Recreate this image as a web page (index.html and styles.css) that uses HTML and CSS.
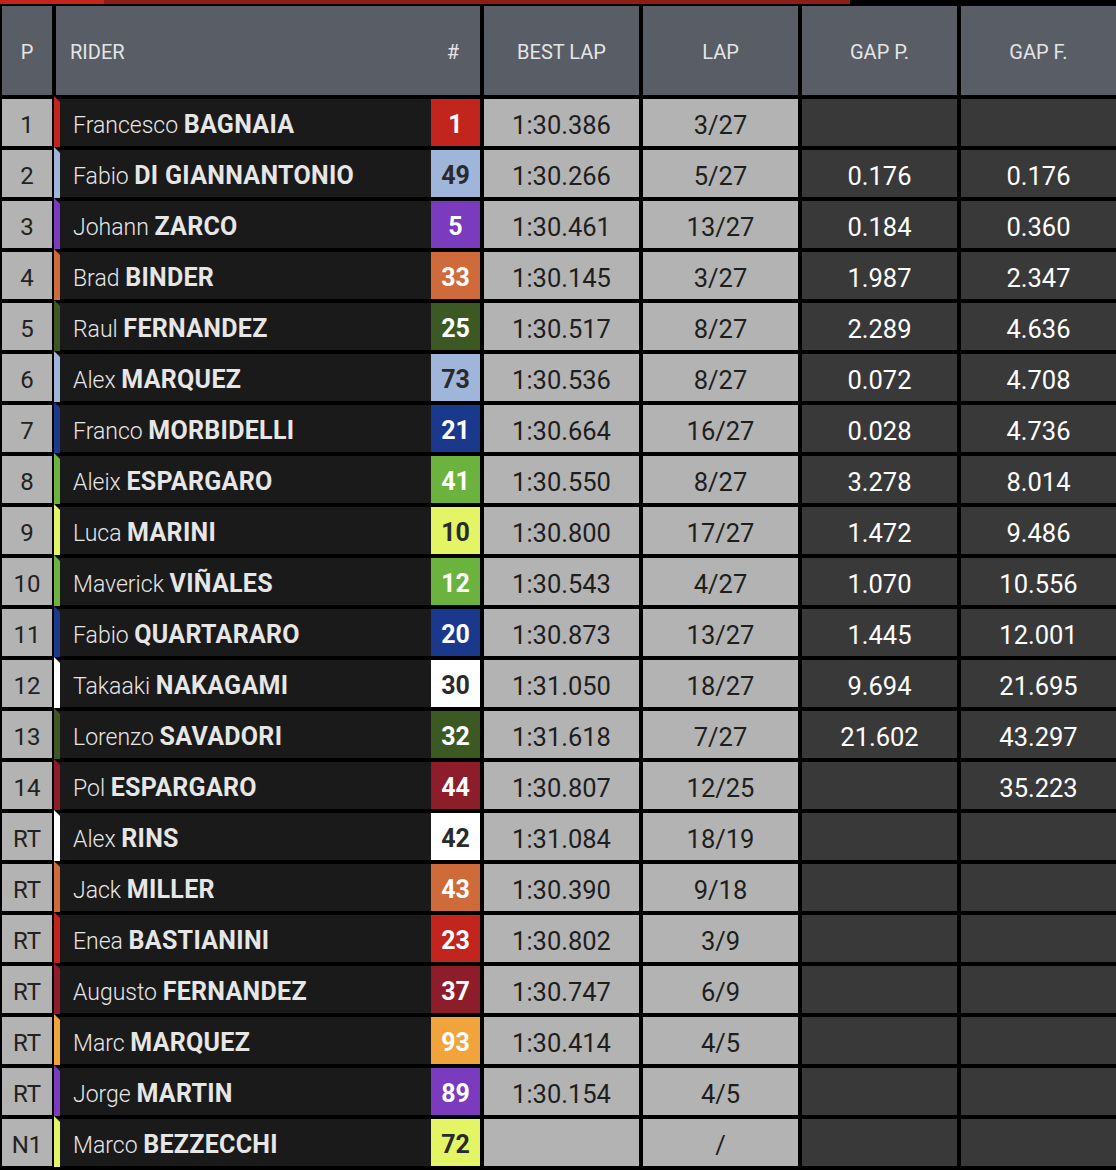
FILE: index.html
```html
<!DOCTYPE html>
<html lang="en">
<head>
<meta charset="utf-8">
<title>Race classification</title>
<link rel="stylesheet" href="styles.css">
</head>
<body>
<div class="progress"><div class="progress-done"></div></div>
<div class="table">
  <div class="row head">
    <div class="h">P</div>
    <div class="h h-rider"><span>RIDER</span><span class="hash">#</span></div>
    <div class="h">BEST LAP</div>
    <div class="h">LAP</div>
    <div class="h">GAP P.</div>
    <div class="h">GAP F.</div>
  </div>

  <div class="row"><div class="pos">1</div><div class="rider c-red"><span class="name">Francesco <b>BAGNAIA</b></span><span class="num">1</span></div><div class="t">1:30.386</div><div class="t">3/27</div><div class="g"></div><div class="g"></div></div>
  <div class="row"><div class="pos">2</div><div class="rider c-lblue dark"><span class="name">Fabio <b>DI GIANNANTONIO</b></span><span class="num">49</span></div><div class="t">1:30.266</div><div class="t">5/27</div><div class="g">0.176</div><div class="g">0.176</div></div>
  <div class="row"><div class="pos">3</div><div class="rider c-purple"><span class="name">Johann <b>ZARCO</b></span><span class="num">5</span></div><div class="t">1:30.461</div><div class="t">13/27</div><div class="g">0.184</div><div class="g">0.360</div></div>
  <div class="row"><div class="pos">4</div><div class="rider c-orange"><span class="name">Brad <b>BINDER</b></span><span class="num">33</span></div><div class="t">1:30.145</div><div class="t">3/27</div><div class="g">1.987</div><div class="g">2.347</div></div>
  <div class="row"><div class="pos">5</div><div class="rider c-dgreen"><span class="name">Raul <b>FERNANDEZ</b></span><span class="num">25</span></div><div class="t">1:30.517</div><div class="t">8/27</div><div class="g">2.289</div><div class="g">4.636</div></div>
  <div class="row"><div class="pos">6</div><div class="rider c-lblue dark"><span class="name">Alex <b>MARQUEZ</b></span><span class="num">73</span></div><div class="t">1:30.536</div><div class="t">8/27</div><div class="g">0.072</div><div class="g">4.708</div></div>
  <div class="row"><div class="pos">7</div><div class="rider c-dblue"><span class="name">Franco <b>MORBIDELLI</b></span><span class="num">21</span></div><div class="t">1:30.664</div><div class="t">16/27</div><div class="g">0.028</div><div class="g">4.736</div></div>
  <div class="row"><div class="pos">8</div><div class="rider c-green"><span class="name">Aleix <b>ESPARGARO</b></span><span class="num">41</span></div><div class="t">1:30.550</div><div class="t">8/27</div><div class="g">3.278</div><div class="g">8.014</div></div>
  <div class="row"><div class="pos">9</div><div class="rider c-yellow dark"><span class="name">Luca <b>MARINI</b></span><span class="num">10</span></div><div class="t">1:30.800</div><div class="t">17/27</div><div class="g">1.472</div><div class="g">9.486</div></div>
  <div class="row"><div class="pos">10</div><div class="rider c-green"><span class="name">Maverick <b>VIÑALES</b></span><span class="num">12</span></div><div class="t">1:30.543</div><div class="t">4/27</div><div class="g">1.070</div><div class="g">10.556</div></div>
  <div class="row"><div class="pos">11</div><div class="rider c-dblue"><span class="name">Fabio <b>QUARTARARO</b></span><span class="num">20</span></div><div class="t">1:30.873</div><div class="t">13/27</div><div class="g">1.445</div><div class="g">12.001</div></div>
  <div class="row"><div class="pos">12</div><div class="rider c-white dark"><span class="name">Takaaki <b>NAKAGAMI</b></span><span class="num">30</span></div><div class="t">1:31.050</div><div class="t">18/27</div><div class="g">9.694</div><div class="g">21.695</div></div>
  <div class="row"><div class="pos">13</div><div class="rider c-dgreen"><span class="name">Lorenzo <b>SAVADORI</b></span><span class="num">32</span></div><div class="t">1:31.618</div><div class="t">7/27</div><div class="g">21.602</div><div class="g">43.297</div></div>
  <div class="row"><div class="pos">14</div><div class="rider c-maroon"><span class="name">Pol <b>ESPARGARO</b></span><span class="num">44</span></div><div class="t">1:30.807</div><div class="t">12/25</div><div class="g"></div><div class="g">35.223</div></div>
  <div class="row"><div class="pos">RT</div><div class="rider c-white dark"><span class="name">Alex <b>RINS</b></span><span class="num">42</span></div><div class="t">1:31.084</div><div class="t">18/19</div><div class="g"></div><div class="g"></div></div>
  <div class="row"><div class="pos">RT</div><div class="rider c-orange"><span class="name">Jack <b>MILLER</b></span><span class="num">43</span></div><div class="t">1:30.390</div><div class="t">9/18</div><div class="g"></div><div class="g"></div></div>
  <div class="row"><div class="pos">RT</div><div class="rider c-red"><span class="name">Enea <b>BASTIANINI</b></span><span class="num">23</span></div><div class="t">1:30.802</div><div class="t">3/9</div><div class="g"></div><div class="g"></div></div>
  <div class="row"><div class="pos">RT</div><div class="rider c-maroon"><span class="name">Augusto <b>FERNANDEZ</b></span><span class="num">37</span></div><div class="t">1:30.747</div><div class="t">6/9</div><div class="g"></div><div class="g"></div></div>
  <div class="row"><div class="pos">RT</div><div class="rider c-amber"><span class="name">Marc <b>MARQUEZ</b></span><span class="num">93</span></div><div class="t">1:30.414</div><div class="t">4/5</div><div class="g"></div><div class="g"></div></div>
  <div class="row"><div class="pos">RT</div><div class="rider c-purple"><span class="name">Jorge <b>MARTIN</b></span><span class="num">89</span></div><div class="t">1:30.154</div><div class="t">4/5</div><div class="g"></div><div class="g"></div></div>
  <div class="row"><div class="pos">N1</div><div class="rider c-yellow dark"><span class="name">Marco <b>BEZZECCHI</b></span><span class="num">72</span></div><div class="t"></div><div class="t">/</div><div class="g"></div><div class="g"></div></div>
</div>
</body>
</html>
```
FILE: styles.css
```css
* { box-sizing: border-box; }
html, body { margin: 0; padding: 0; background: #000; }
body {
  width: 1116px;
  height: 1170px;
  overflow: hidden;
  font-family: Roboto, "Noto Sans", sans-serif;
}

.progress {
  display: flex;
  height: 4px;
  width: 850px;
  background: #8e1d17;
}
.progress-done { width: 104px; height: 4px; background: #c4241b; }

.table {
  display: flex;
  flex-direction: column;
  gap: 4px;
  margin-top: 2px;
  padding-left: 2px;
}

.row {
  display: grid;
  grid-template-columns: 50px 424px 1fr 1fr 1fr 1fr;
  column-gap: 4px;
  height: 47px;
}
.row.head { height: 89px; }

.h {
  background: #595d65;
  color: #e4e5e7;
  font-size: 20px;
  padding-top: 3px;
  display: flex;
  align-items: center;
  justify-content: center;
}
.h-rider {
  justify-content: space-between;
  padding: 3px 21px 0 14px;
}

.pos {
  background: #b3b3b3;
  color: #222;
  font-size: 24px;
  padding-top: 4px;
  display: flex;
  align-items: center;
  justify-content: center;
}

.rider {
  position: relative;
  background: #1a1a1a;
  display: flex;
  align-items: center;
  justify-content: space-between;
  color: #e6e6e6;
  font-size: 23px;
}
.rider::before {
  content: "";
  position: absolute;
  left: -2px;
  top: -3px;
  bottom: -1px;
  width: 6px;
  background: var(--team);
  clip-path: polygon(0 0, 100% 6px, 100% 100%, 0 100%);
}
.name {
  padding-left: 17px;
  padding-top: 4px;
  font-weight: 300;
  white-space: nowrap;
}
.name b {
  font-weight: 700;
  font-size: 25px;
  letter-spacing: 0.3px;
}
.num {
  width: 49px;
  height: 100%;
  padding-top: 4px;
  background: var(--team);
  color: #fff;
  font-weight: 700;
  font-size: 25px;
  display: flex;
  align-items: center;
  justify-content: center;
}
.rider.dark .num { color: #2a2a2a; }

.t, .g {
  font-size: 25.5px;
  padding-top: 4px;
  display: flex;
  align-items: center;
  justify-content: center;
}
.t {
  background: #b3b3b3;
  color: #1e1e1e;
}
.g {
  background: #393939;
  color: #fff;
}

.c-red { --team: #c1251d; }
.c-lblue { --team: #9fb5da; }
.c-purple { --team: #7a3bbf; }
.c-orange { --team: #cf6a3b; }
.c-dgreen { --team: #3c5923; }
.c-dblue { --team: #1a398c; }
.c-green { --team: #6bb33e; }
.c-yellow { --team: #e3f564; }
.c-white { --team: #ffffff; }
.c-maroon { --team: #8d1d2a; }
.c-amber { --team: #f1a43b; }
```
